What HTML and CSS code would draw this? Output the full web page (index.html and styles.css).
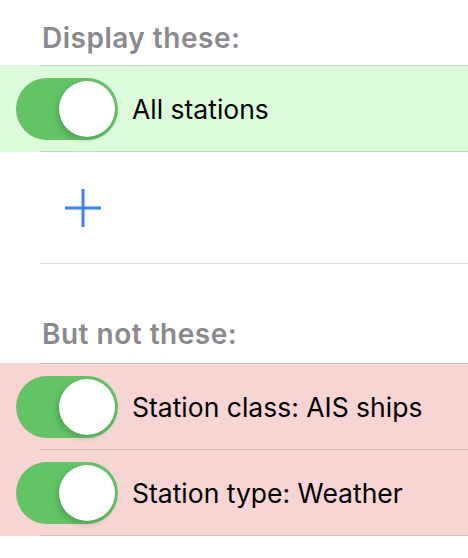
FILE: index.html
```html
<!DOCTYPE html>
<html>
<head>
<meta charset="utf-8">
<link rel="stylesheet" href="styles.css">
</head>
<body>
<div class="header first">Display these:</div>
<div class="group include">
  <div class="line"></div>
  <div class="cell">
    <div class="switch on"><div class="knob"></div></div>
    <div class="label">All stations</div>
  </div>
  <div class="line"></div>
</div>
<div class="cell add">
  <svg class="plus" width="36" height="38" viewBox="0 0 36 38">
    <line x1="18" y1="0" x2="18" y2="38" stroke="#3b84f7" stroke-width="3"/>
    <line x1="0" y1="19" x2="36" y2="19" stroke="#3b84f7" stroke-width="3"/>
  </svg>
</div>
<div class="line plain"></div>
<div class="header second">But not these:</div>
<div class="group exclude">
  <div class="line"></div>
  <div class="cell">
    <div class="switch on"><div class="knob"></div></div>
    <div class="label">Station class: AIS ships</div>
  </div>
  <div class="line"></div>
  <div class="cell">
    <div class="switch on"><div class="knob"></div></div>
    <div class="label">Station type: Weather</div>
  </div>
  <div class="line"></div>
</div>
</body>
</html>
```
FILE: styles.css
```css
html, body {
  margin: 0;
  padding: 0;
  background: #ffffff;
}
body {
  font-family: Inter, "Liberation Sans", sans-serif;
  width: 468px;
  height: 558px;
  overflow: hidden;
}
.header {
  box-sizing: border-box;
  padding-left: 42px;
  font-size: 28px;
  line-height: 32px;
  font-weight: 600;
  letter-spacing: 0.5px;
  color: #8a8a8e;
}
.header.first {
  height: 65px;
  padding-top: 22px;
}
.header.second {
  height: 99px;
  padding-top: 54px;
}
.group.include {
  background: #dcfcdc;
}
.group.exclude {
  background: #f7d5d5;
}
.line {
  height: 1px;
  margin-left: 40px;
  background: rgba(0, 0, 0, 0.13);
}
.line.plain {
  background: #dedede;
}
.cell {
  height: 85px;
  display: flex;
  align-items: center;
}
.cell.add {
  height: 111px;
}
.plus {
  margin-left: 65px;
  display: block;
}
.switch {
  box-sizing: border-box;
  margin-left: 16px;
  width: 102px;
  height: 62px;
  border-radius: 31px;
  background: #63c466;
  position: relative;
  flex: none;
}
.knob {
  position: absolute;
  top: 3px;
  right: 3px;
  width: 56px;
  height: 56px;
  border-radius: 50%;
  background: #ffffff;
  box-shadow: -2px 3px 6px rgba(0, 0, 0, 0.18), 0 0 1px rgba(0, 0, 0, 0.1);
}
.label {
  margin-left: 14px;
  font-size: 26.5px;
  color: #000000;
  white-space: nowrap;
}
```
